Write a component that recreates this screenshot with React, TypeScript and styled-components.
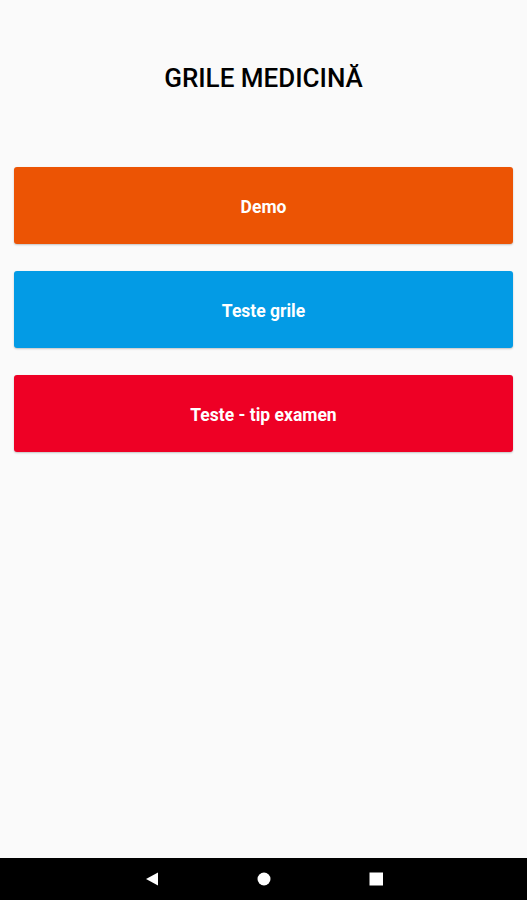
import React from 'react';
import styled, { createGlobalStyle } from 'styled-components';

type MenuItem = {
	label: string;
	color: string;
};

const items: MenuItem[] = [
	{ label: 'Demo', color: '#ec5404' },
	{ label: 'Teste grile', color: '#039be5' },
	{ label: 'Teste - tip examen', color: '#ee0025' },
];

const App: React.FunctionComponent = () => {
	return (
		<>
			<GlobalStyle />
			<Screen>
				<Main>
					<Title>GRILE MEDICINĂ</Title>
					<Menu>
						{items.map(item => (
							<MenuButton key={item.label} $bg={item.color}>
								{item.label}
							</MenuButton>
						))}
					</Menu>
				</Main>
				<NavBar>
					<NavIcon viewBox="0 0 14 14">
						<path d="M13 0.5 L13 13.5 L1 7 Z" fill="#fff" />
					</NavIcon>
					<NavIcon viewBox="0 0 14 14">
						<circle cx="7" cy="7" r="6.5" fill="#fff" />
					</NavIcon>
					<NavIcon viewBox="0 0 14 14">
						<rect x="0.5" y="0.5" width="13.5" height="13" fill="#fff" />
					</NavIcon>
				</NavBar>
			</Screen>
		</>
	);
};

const GlobalStyle = createGlobalStyle`
	html, body {
		margin: 0;
		padding: 0;
		background: #fafafa;
	}
	body {
		font-family: Roboto, 'Liberation Sans', Arial, sans-serif;
	}
`;

const Screen = styled.div`
	display: flex;
	flex-direction: column;
	min-height: 100vh;
	background-color: #fafafa;
`;

/* ************** Main ************** */
const Main = styled.main`
	flex: 1;
	display: flex;
	flex-direction: column;
	padding: 62px 14px 0;
`;

const Title = styled.h1`
	margin: 0 0 73px;
	text-align: center;
	font-size: 26px;
	line-height: 32px;
	font-weight: 500;
	color: #000;
`;

const Menu = styled.div`
	display: flex;
	flex-direction: column;
	gap: 27px;
`;

const MenuButton = styled.button<{ $bg: string }>`
	display: flex;
	align-items: center;
	justify-content: center;
	width: 100%;
	height: 77px;
	padding: 2px 0 0;
	border: none;
	border-radius: 3px;
	background-color: ${props => props.$bg};
	box-shadow: 0 1px 2px rgba(0, 0, 0, 0.22);
	color: #fff;
	font-family: Roboto, 'Liberation Sans', Arial, sans-serif;
	font-size: 17.5px;
	font-weight: 700;
	cursor: pointer;
`;

/* ************** Nav bar ************** */
const NavBar = styled.nav`
	display: flex;
	align-items: center;
	justify-content: center;
	gap: 98px;
	height: 42px;
	background-color: #000;
`;

const NavIcon = styled.svg`
	width: 14px;
	height: 14px;
`;

export default App;
